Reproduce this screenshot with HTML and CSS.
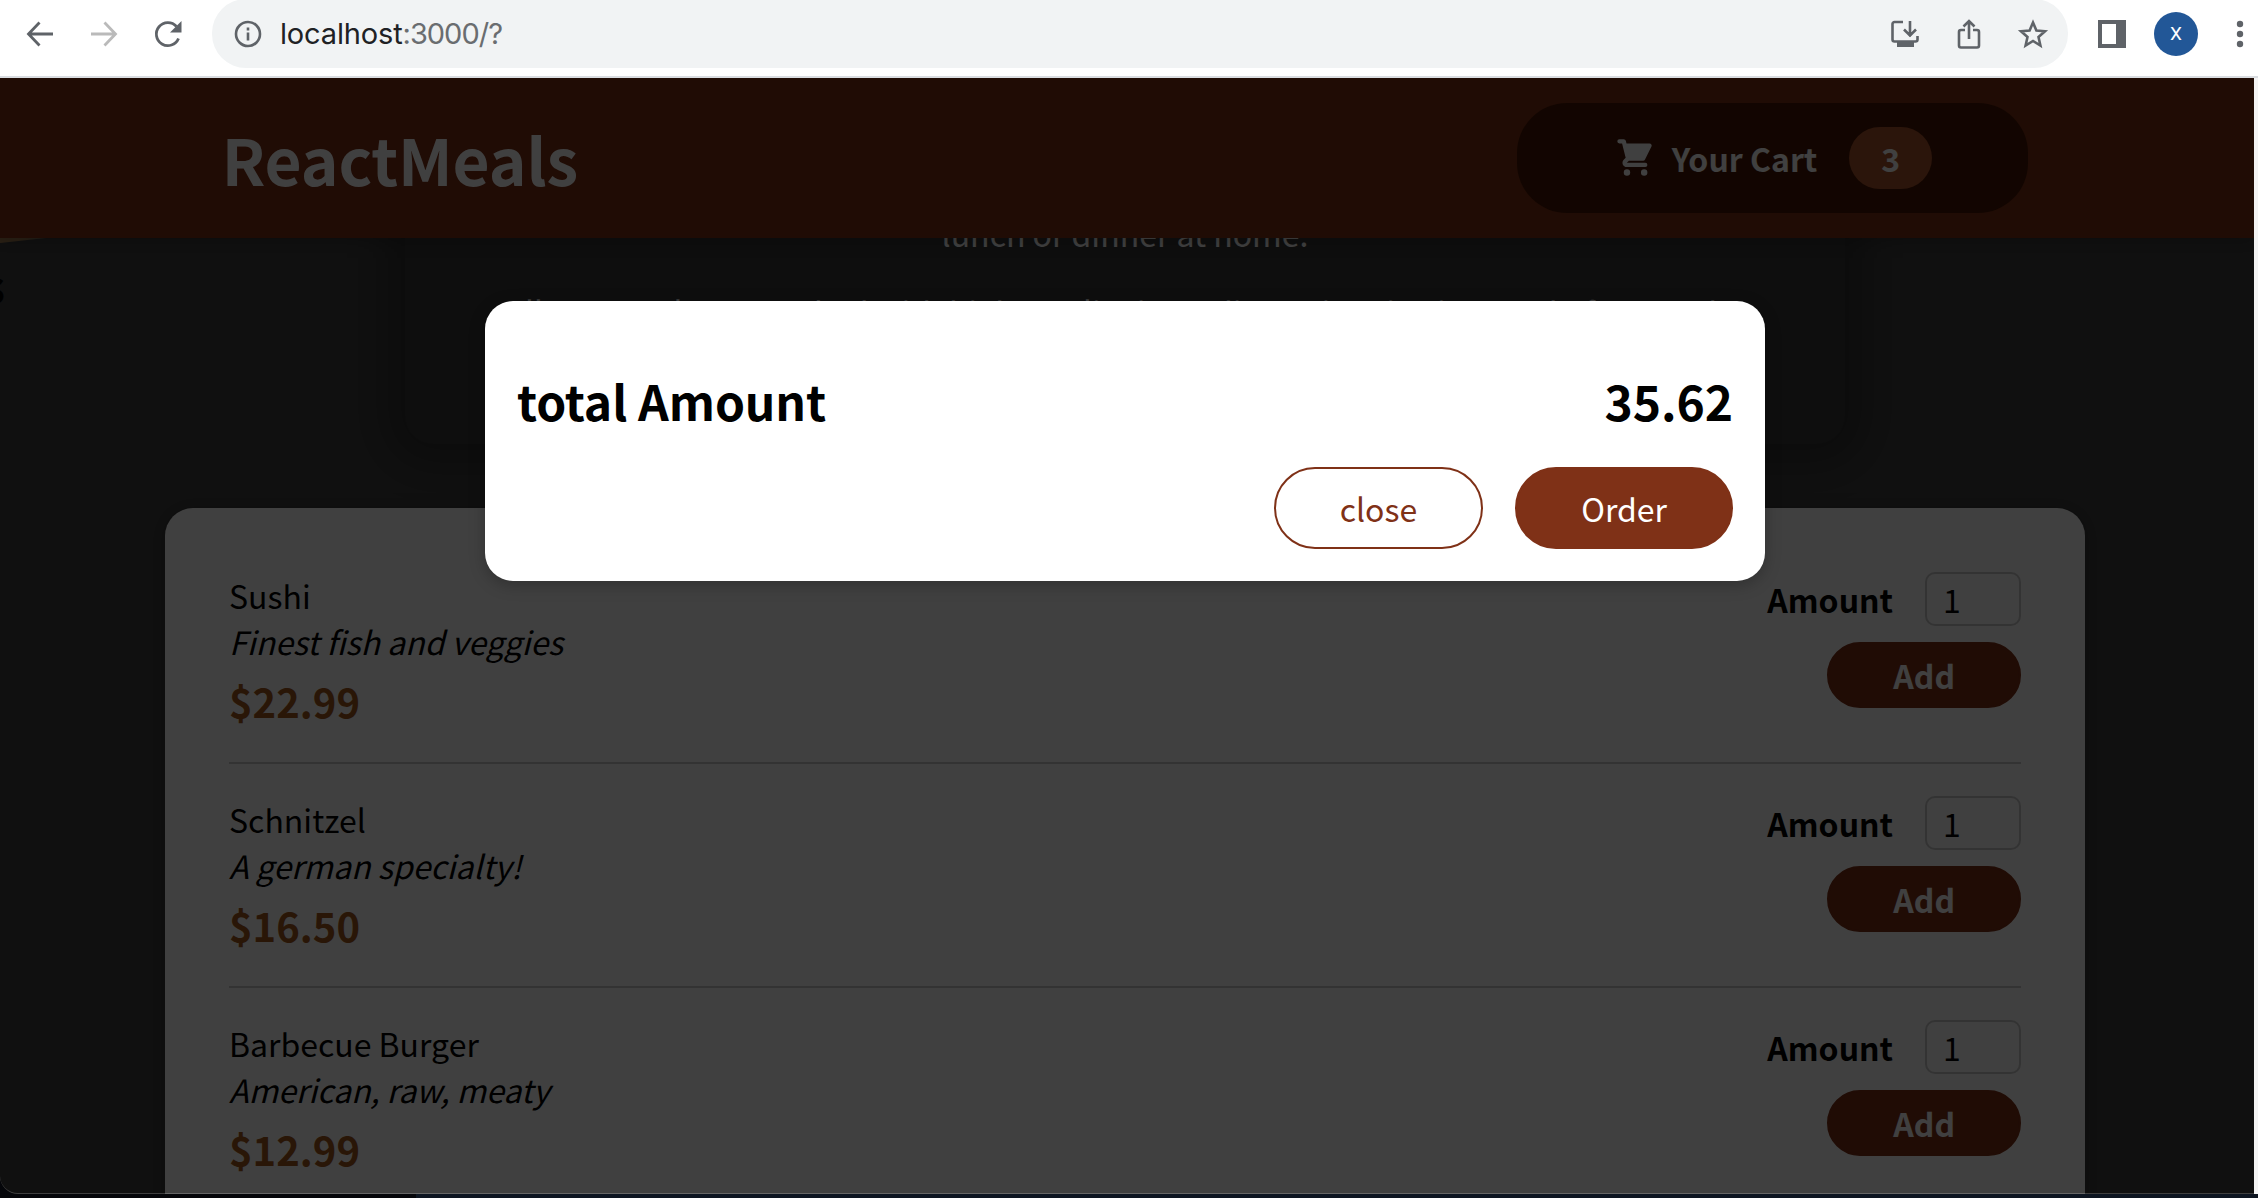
FILE: index.html
```html
<!DOCTYPE html>
<html lang="en">
<head>
<meta charset="utf-8">
<title>ReactMeals</title>
<link rel="stylesheet" href="styles.css">
</head>
<body>
<div class="toolbar">
  <svg class="nav-icon back" viewBox="0 0 32 32"><path d="M29 16H5M15.500 4.500L4.500 16l11 11.500"/></svg>
  <svg class="nav-icon forward" viewBox="0 0 32 32"><path d="M3 16h24M16.500 4.500L27.500 16l-11 11.500"/></svg>
  <svg class="nav-icon reload" viewBox="0 0 32 32"><path d="M26.500 20.500A11.500 11.500 0 1 1 24.500 8.500"/><path class="solid" d="M29.500 3v11.500H18z"/></svg>
  <div class="omnibox">
    <svg class="info" viewBox="0 0 28 28"><circle cx="14" cy="14" r="12"/><path d="M14 12.500v8M14 7.500v3"/></svg>
    <span class="url"><span class="host">localhost</span>:3000/?</span>
    <svg class="tool install" viewBox="0 0 32 32"><path d="M14 4H5.500a2 2 0 0 0-2 2v15.500a2 2 0 0 0 2 2h21a2 2 0 0 0 2-2V18M21 3v13"/><path d="M15 11.500l6 6 6-6"/><path class="solid" d="M17 14h8l-4 5zM8 24h17v5H8z"/></svg>
    <svg class="tool share" viewBox="0 0 32 32"><path d="M12 12H8a2 2 0 0 0-2 2v13.500a2 2 0 0 0 2 2h16a2 2 0 0 0 2-2V14a2 2 0 0 0-2-2h-4M16 21V3M10.500 8.500L16 3l5.500 5.500"/></svg>
    <svg class="tool star" viewBox="0 0 32 32"><path d="M16 4.500l3.400 8 8.600.8-6.500 5.700 1.900 8.500L16 23l-7.400 4.500 1.900-8.500L4 13.300l8.600-.8z"/></svg>
  </div>
  <svg class="panel" viewBox="0 0 28 28"><path d="M0 0h28v28H0zM4 4v20h14V4z" fill-rule="evenodd"/></svg>
  <span class="avatar">X</span>
  <svg class="menu" viewBox="0 0 8 28"><circle cx="4" cy="4" r="3.200"/><circle cx="4" cy="14" r="3.200"/><circle cx="4" cy="24" r="3.200"/></svg>
</div>
<div class="window-frame">
<div class="window">
  <div class="app">
    <header class="header">
      <h1>ReactMeals</h1>
      <button class="cart-button">
        <svg class="cart-icon" viewBox="0 0 20 20"><path d="M3 1a1 1 0 000 2h1.220l.305 1.222a.997.997 0 00.010.042l1.358 5.430-.893.892C3.740 11.846 4.632 14 6.414 14H15a1 1 0 000-2H6.414l1-1H14a1 1 0 00.894-.553l3-6A1 1 0 0017 3H6.280l-.310-1.243A1 1 0 005 1H3zM16 16.500a1.500 1.500 0 11-3 0 1.500 1.500 0 013 0zM6.500 18a1.500 1.500 0 100-3 1.500 1.500 0 000 3z"/></svg>
        <span>Your Cart</span>
        <span class="badge">3</span>
      </button>
    </header>
    <div class="banner-edge"></div>
    <span class="banner-alt">s</span>
    <section class="summary">
      <p>Choose your favorite meal from our broad selection of available meals and enjoy a delicious<br>lunch or dinner at home.</p>
      <p>All our meals are cooked with high-quality ingredients, just-in-time and of course by experienced chefs!</p>
    </section>
    <ul class="meals">
      <li class="meal">
        <div><h3>Sushi</h3><div class="description">Finest fish and veggies</div><div class="price">$22.99</div></div>
        <form class="meal-form"><div class="field"><label>Amount</label><input value="1"></div><button class="add" type="button">Add</button></form>
      </li>
      <li class="meal">
        <div><h3>Schnitzel</h3><div class="description">A german specialty!</div><div class="price">$16.50</div></div>
        <form class="meal-form"><div class="field"><label>Amount</label><input value="1"></div><button class="add" type="button">Add</button></form>
      </li>
      <li class="meal">
        <div><h3>Barbecue Burger</h3><div class="description">American, raw, meaty</div><div class="price">$12.99</div></div>
        <form class="meal-form"><div class="field"><label>Amount</label><input value="1"></div><button class="add" type="button">Add</button></form>
      </li>
    </ul>
  </div>
  <div class="backdrop"></div>
  <div class="modal">
    <div class="total"><span>total Amount</span><span>35.62</span></div>
    <div class="actions"><button class="close">close</button><button class="order">Order</button></div>
  </div>
</div>
</div>
<div class="desktop"></div>
</body>
</html>
```
FILE: styles.css
```css
* { box-sizing: border-box; }

body {
  margin: 0;
  width: 2258px;
  height: 1198px;
  overflow: hidden;
  background: #fff;
  color: #000;
  font: 32px "Noto Sans CJK JP", sans-serif;
}

button, input { font: inherit; }

/* Browser toolbar */
.toolbar {
  display: flex;
  align-items: center;
  height: 78px;
  padding: 0 14px 9px 24px;
  border-bottom: 2px solid #dadde1;
  background: #fff;
}

svg { flex: none; }

.nav-icon {
  width: 32px;
  height: 32px;
  margin-right: 32px;
  fill: none;
  stroke: #5f6368;
  stroke-width: 2.8;
}
.nav-icon.forward { stroke: #bababa; }
.nav-icon.reload { margin-right: 28px; }
.solid { fill: #5f6368; stroke: none; }

.omnibox {
  display: flex;
  align-items: center;
  width: 1856px;
  height: 69px;
  padding: 0 19px 0 22px;
  border-radius: 34px;
  background: #f1f3f4;
}
.info {
  width: 28px;
  height: 28px;
  fill: none;
  stroke: #5f6368;
  stroke-width: 2.6;
}
.url {
  flex: 1;
  margin-left: 18px;
  color: #6a6d70;
  font: 29px Inter, sans-serif;
  letter-spacing: -1px;
}
.host { color: #202124; letter-spacing: -.15px; }
.tool {
  width: 32px;
  height: 32px;
  margin-left: 32px;
  fill: none;
  stroke: #5f6368;
  stroke-width: 2.6;
}
.panel { width: 28px; height: 28px; margin-left: 30px; fill: #5f6368; }
.avatar {
  width: 44px;
  height: 44px;
  margin: 0 38px 0 28px;
  border-radius: 50%;
  background: #225797;
  color: #fff;
  font: 19px/44px Roboto, sans-serif;
  text-align: center;
}
.menu { width: 8px; height: 28px; fill: #5f6368; }

/* Page viewport */
.window-frame {
  border-right: 4px solid #f4f4f4;
  background: #05060a;
}
.window {
  position: relative;
  width: 2254px;
  height: 1116px;
  overflow: hidden;
  border-bottom-left-radius: 18px;
  background: #414141;
}
.window::after {
  content: "";
  position: absolute;
  inset: 0;
  z-index: 4;
  border-bottom: 1px solid rgba(255, 255, 255, .2);
  border-bottom-left-radius: 18px;
}
.app { width: 2258px; margin-left: -4px; }

.header {
  position: relative;
  z-index: 1;
  display: flex;
  align-items: center;
  justify-content: space-between;
  height: 160px;
  padding: 0 10%;
  background: #7f3015;
  color: #fff;
  box-shadow: 0 2px 16px rgba(0, 0, 0, .25);
}
.header h1 { margin: 0; font-size: 64px; letter-spacing: -.12px; }

.cart-button {
  display: flex;
  align-items: center;
  padding: 24px 96px;
  border: none;
  border-radius: 50px;
  background: #481704;
  color: #fff;
  font-weight: bold;
}
.cart-icon { width: 43px; height: 43px; margin-right: 16px; fill: #fff; }
.badge {
  margin-left: 32px;
  padding: 8px 32px;
  border-radius: 50px;
  background: #ac542d;
}

.banner-edge {
  position: absolute;
  top: 160px;
  left: 0;
  width: 46px;
  height: 5px;
  background: linear-gradient(90deg, #a98253 18px, #77705f);
  clip-path: polygon(0 0, 100% 0, 0 100%);
}
.banner-alt {
  position: absolute;
  top: 176px;
  left: -16px;
  font-size: 42px;
  font-weight: bold;
}

.summary {
  width: 1440px;
  margin: -106px auto 0;
  padding: 32px;
  border-radius: 28px;
  background: #383838;
  color: #fff;
  text-align: center;
  box-shadow: 0 2px 36px 20px rgba(0, 0, 0, .25);
}
.summary p { margin: 0 0 32px; }

.meals {
  width: 1920px;
  margin: 64px auto 0;
  padding: 32px;
  border-radius: 28px;
  background: #fff;
  list-style: none;
  box-shadow: 0 2px 16px rgba(0, 0, 0, .25);
}
.meal {
  display: flex;
  justify-content: space-between;
  margin: 32px;
  padding-bottom: 32px;
  border-bottom: 2px solid #ccc;
}
.meal h3 { margin: 0; font-size: 32px; font-weight: normal; }
.description { font-style: italic; }
.price { margin-top: 8px; color: #a55a1c; font-size: 40px; font-weight: bold; }

.meal-form { text-align: right; }
.field { display: flex; margin-bottom: 16px; }
.field label { margin: 4px 32px 0 0; font-weight: bold; }
.field input {
  width: 96px;
  height: 54px;
  padding: 2px 0 2px 16px;
  border: 2px solid #ccc;
  border-radius: 10px;
  background: #fff;
}
.add {
  padding: 8px 64px;
  border: 2px solid #7f3015;
  border-radius: 40px;
  background: #7f3015;
  color: #fff;
  font-weight: bold;
}

/* Cart dialog */
.backdrop {
  position: absolute;
  inset: 0;
  z-index: 2;
  background: rgba(0, 0, 0, .75);
}
.modal {
  position: absolute;
  top: 223px;
  left: 485px;
  z-index: 3;
  width: 1280px;
  height: 280px;
  padding: 32px;
  border-radius: 28px;
  background: #fff;
  box-shadow: 0 4px 16px rgba(0, 0, 0, .25);
}
.total {
  display: flex;
  justify-content: space-between;
  margin: 32px 0;
  font-size: 48px;
  font-weight: bold;
  letter-spacing: -.08px;
}
.actions { display: flex; justify-content: flex-end; gap: 32px; }
.actions button {
  padding: 16px 64px;
  border: 2px solid #7f3117;
  border-radius: 50px;
}
.close { background: #fff; color: #7f3117; }
.order { background: #7f3117; color: #fff; }

.desktop {
  height: 4px;
  background: linear-gradient(90deg, #05060a 416px, #0d1521 416px);
}
```
